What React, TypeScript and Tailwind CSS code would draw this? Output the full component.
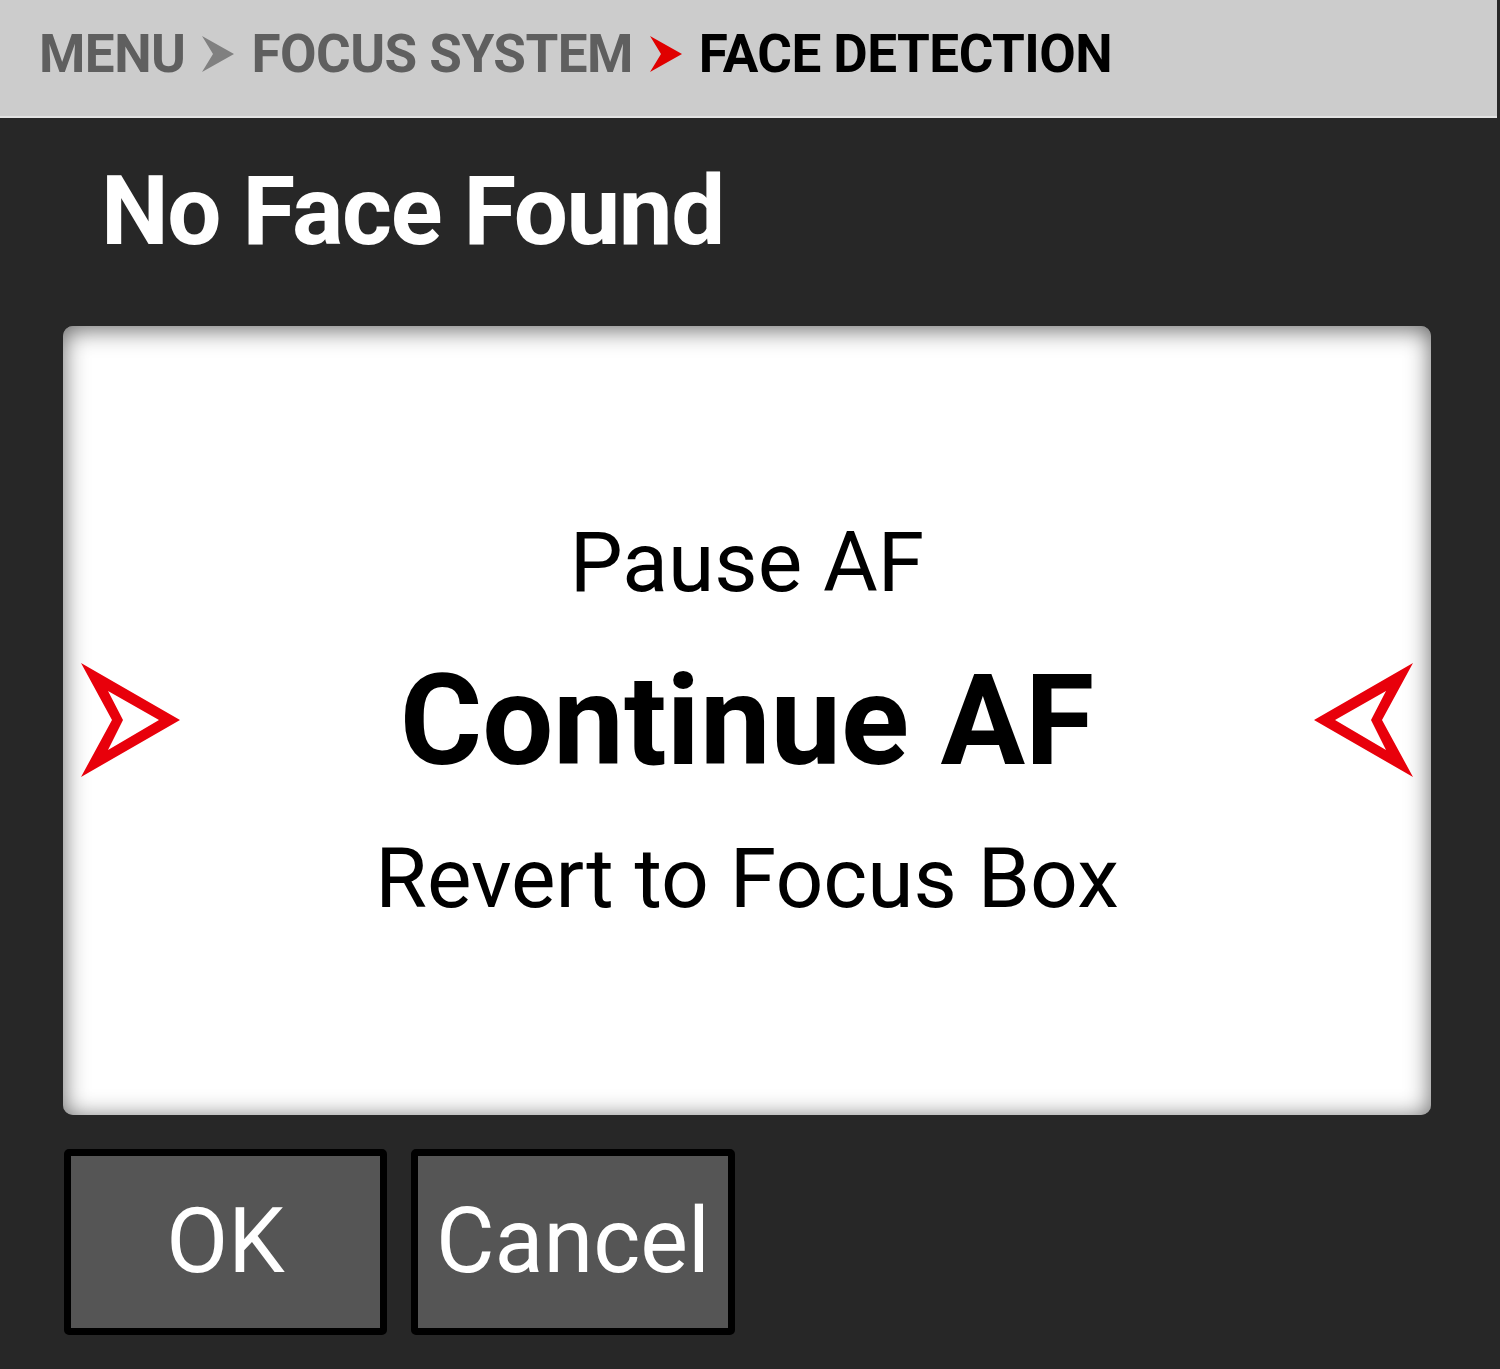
import React from 'react'

function Chevron({ color }: { color: string }) {
  return (
    <svg width="32" height="36" viewBox="0 0 32 36" className="shrink-0">
      <path d="M0 0 L32 18 L0 36 L11 18 Z" fill={color} />
    </svg>
  )
}

function SelectArrow({ flip }: { flip?: boolean }) {
  return (
    <svg
      width="100"
      height="115"
      viewBox="0 0 100 115"
      className={flip ? 'shrink-0 -scale-x-100' : 'shrink-0'}
    >
      <path
        fillRule="evenodd"
        d="M0 0 L99 57 L0 114 L31 57 Z M27 28 L78 57 L27 87 L42 57 Z"
        fill="#e8000b"
      />
    </svg>
  )
}

export default function App() {
  return (
    <div className="w-[1500px] h-[1369px] bg-[#272727] font-['Roboto',sans-serif] overflow-hidden">
      <header className="w-[1497px] h-[118px] bg-[#cccccc] border-b-2 border-[#e2e2e2] flex items-center gap-[17px] pl-[39px] pb-[8px] text-[53px] font-bold leading-none tracking-[-0.01em]">
        <span className="text-[#5f5f5f]">MENU</span>
        <Chevron color="#808080" />
        <span className="text-[#5f5f5f]">FOCUS SYSTEM</span>
        <Chevron color="#e00000" />
        <span className="text-black">FACE DETECTION</span>
      </header>

      <h1 className="mt-[45px] ml-[101px] text-white text-[96px] font-bold leading-none tracking-[-0.015em]">
        No Face Found
      </h1>

      <div className="mt-[67px] ml-[63px] w-[1368px] h-[789px] bg-white rounded-[10px] shadow-[inset_0_3px_24px_rgba(0,0,0,0.62)] flex items-center px-[18px]">
        <SelectArrow />
        <div className="flex-1 flex flex-col items-center gap-[53px] text-black">
          <p className="text-[84px] leading-none">Pause AF</p>
          <p className="text-[126px] font-bold leading-none">Continue AF</p>
          <p className="text-[84px] leading-none">Revert to Focus Box</p>
        </div>
        <SelectArrow flip />
      </div>

      <div className="mt-[34px] ml-[64px] flex gap-[24px]">
        <button className="w-[323px] h-[186px] bg-[#555555] border-[7px] border-black rounded-[5px] text-white text-[90px] leading-none">
          OK
        </button>
        <button className="w-[324px] h-[186px] bg-[#555555] border-[7px] border-black rounded-[5px] text-white text-[90px] leading-none">
          Cancel
        </button>
      </div>
    </div>
  )
}
